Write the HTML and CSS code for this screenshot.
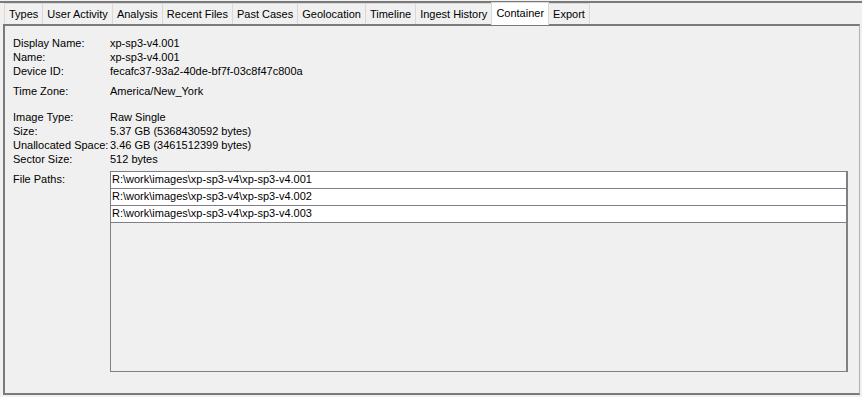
FILE: index.html
```html
<!DOCTYPE html>
<html>
<head>
<meta charset="utf-8">
<link rel="stylesheet" href="styles.css">
</head>
<body>
<div class="window">
  <div class="tabs">
    <div class="tab">Types</div>
    <div class="tab">User Activity</div>
    <div class="tab">Analysis</div>
    <div class="tab">Recent Files</div>
    <div class="tab">Past Cases</div>
    <div class="tab">Geolocation</div>
    <div class="tab">Timeline</div>
    <div class="tab">Ingest History</div>
    <div class="tab active">Container</div>
    <div class="tab">Export</div>
  </div>
  <div class="panel">
    <div class="group">
      <div class="row"><span class="label">Display Name:</span><span>xp-sp3-v4.001</span></div>
      <div class="row"><span class="label">Name:</span><span>xp-sp3-v4.001</span></div>
      <div class="row"><span class="label">Device ID:</span><span>fecafc37-93a2-40de-bf7f-03c8f47c800a</span></div>
    </div>
    <div class="group tz">
      <div class="row"><span class="label">Time Zone:</span><span>America/New_York</span></div>
    </div>
    <div class="group img">
      <div class="row"><span class="label">Image Type:</span><span>Raw Single</span></div>
      <div class="row"><span class="label">Size:</span><span>5.37 GB (5368430592 bytes)</span></div>
      <div class="row"><span class="label">Unallocated Space:</span><span>3.46 GB (3461512399 bytes)</span></div>
      <div class="row"><span class="label">Sector Size:</span><span>512 bytes</span></div>
    </div>
    <div class="paths">
      <span class="label plabel">File Paths:</span>
      <div class="table">
        <div class="cell">R:\work\images\xp-sp3-v4\xp-sp3-v4.001</div>
        <div class="cell">R:\work\images\xp-sp3-v4\xp-sp3-v4.002</div>
        <div class="cell">R:\work\images\xp-sp3-v4\xp-sp3-v4.003</div>
      </div>
    </div>
  </div>
</div>
</body>
</html>
```
FILE: styles.css
```css
html, body {
  margin: 0;
  padding: 0;
  background: #f0f0f0;
}
body {
  font-family: "Liberation Sans", Arial, sans-serif;
  font-size: 11px;
  color: #000;
  width: 862px;
  height: 397px;
  overflow: hidden;
}
.window {
  border-top: 2px solid #7a7a7a;
  margin-top: 1px;
  padding: 0 2px 0 3px;
  height: 394px;
  box-sizing: border-box;
  display: flex;
  flex-direction: column;
}
.tabs {
  display: flex;
  height: 21px;
  padding-left: 1px;
  align-items: flex-end;
  position: relative;
  z-index: 1;
}
.tab {
  height: 21px;
  box-sizing: border-box;
  border: 1px solid #d9d9d9;
  border-bottom: none;
  margin-right: -1px;
  padding: 0 4px;
  line-height: 20px;
  background: #f0f0f0;
}
.tab.active {
  background: #fff;
  height: 23px;
  margin-bottom: -1px;
  line-height: 20px;
  padding-bottom: 2px;
  border-color: #d9d9d9;
  position: relative;
}
.panel {
  flex: 1;
  border: 2px solid #7a7a7a;
  border-right: 1px solid #b0b0b0;
  padding: 10px 0 0 8px;
}
.row {
  display: flex;
  height: 14px;
  line-height: 14px;
}
.label {
  width: 97px;
  flex: none;
  white-space: nowrap;
}
.tz { margin-top: 6px; }
.img { margin-top: 12px; }
.paths {
  display: flex;
  margin-top: 5px;
}
.plabel { line-height: 14px; margin-top: 1px; }
.table {
  width: 738px;
  height: 201px;
  box-sizing: border-box;
  border: 1px solid #7f7f85;
  border-right: 2px solid #7f7f85;
}
.cell {
  background: #fff;
  height: 16px;
  line-height: 15px;
  border-bottom: 1px solid #7f7f85;
  padding-left: 1px;
}
```
